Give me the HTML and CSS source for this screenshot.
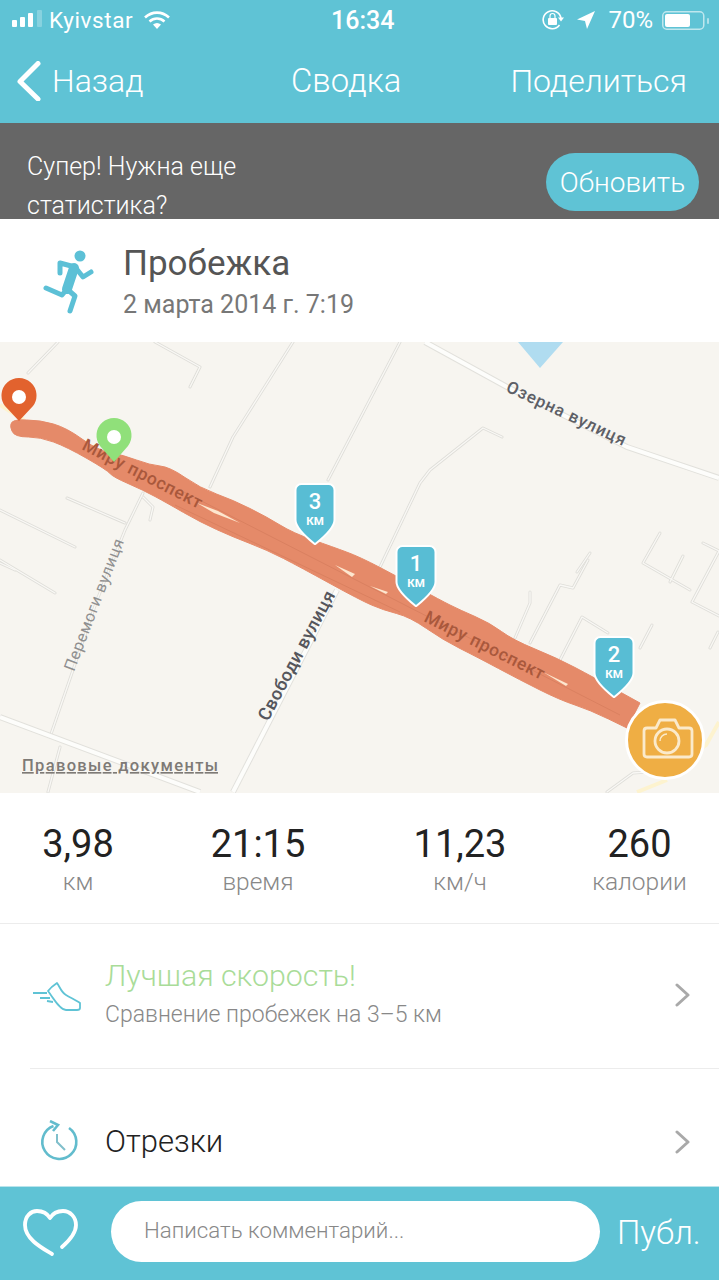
FILE: index.html
```html
<!DOCTYPE html>
<html lang="ru">
<head>
<meta charset="utf-8">
<title>Сводка</title>
<link rel="stylesheet" href="styles.css">
</head>
<body>
<div class="app">
  <header class="top">
    <div class="status">
      <div class="status-side">
        <svg class="signal" width="32" height="20" viewBox="0 0 32 20"><rect class="bar" x="0" y="10" width="5" height="7" rx="1"/><rect class="bar" x="8" y="7" width="5" height="10" rx="1"/><rect class="bar" x="16" y="3" width="5" height="14" rx="1"/><rect class="bar faded" x="25" y="0" width="5" height="17" rx="1"/></svg>
        <span class="carrier">Kyivstar</span>
        <svg class="wifi" width="28" height="20" viewBox="0 0 28 20"><path class="wifi-arc" d="M2 7.500C9 1 19 1 26 7.500"/><path class="wifi-arc" d="M6.500 11.500C11 7.500 17 7.500 21.500 11.500"/><path class="icon-fill" d="M10 14.500C12.500 12.500 15.500 12.500 18 14.500L14 19Z"/></svg>
      </div>
      <span class="clock">16:34</span>
      <div class="status-side">
        <svg class="rot-lock" width="24" height="22" viewBox="0 0 24 22"><path class="lock-arc" d="M18.500 16A9 9 0 1 1 20 9"/><path class="icon-fill" d="M17 8.500h6l-3 4z"/><rect class="icon-fill" x="7" y="9" width="9" height="7" rx="1"/><path class="lock-arc thin" d="M9 9V7a2.500 2.500 0 0 1 5 0v2"/></svg>
        <svg class="loc" width="20" height="20" viewBox="0 0 20 20"><path class="icon-fill" d="M19 1 1 9.500l8 1.500 2 8Z"/></svg>
        <span class="percent">70%</span>
        <svg class="battery" width="49" height="20" viewBox="0 0 49 20"><rect class="batt-case" x="0.750" y="0.750" width="41" height="17.500" rx="4"/><rect class="icon-fill" x="3" y="3" width="25" height="13" rx="2"/><rect class="batt-nub" x="45" y="7" width="2" height="6" rx="1"/></svg>
      </div>
    </div>
    <nav class="nav">
      <div class="nav-back">
        <svg width="24" height="40" viewBox="0 0 24 40"><path class="back-arrow" d="M21 2.500 3 20.500 21 38"/></svg>
        <span>Назад</span>
      </div>
      <span class="nav-title">Сводка</span>
      <span class="nav-action">Поделиться</span>
    </nav>
  </header>

  <section class="banner">
    <p class="banner-text">Супер! Нужна еще<br>статистика?</p>
    <span class="banner-btn">Обновить</span>
  </section>

  <section class="activity">
    <svg class="runner" width="56" height="68" viewBox="40 248 56 68">
      <circle class="icon-fill-b" cx="80" cy="256" r="5.500"/>
      <path class="run-limb" d="M60 273V263L75 267L83 277L91 272"/>
      <path class="run-torso" d="M74 268 67 289"/>
      <path class="run-limb" d="M67 289 62 295 46 288"/>
      <path class="run-limb" d="M67 289 75 296 70 311"/>
    </svg>
    <div class="activity-text">
      <h1 class="activity-title">Пробежка</h1>
      <p class="activity-date">2 марта 2014 г. 7:19</p>
    </div>
  </section>

  <section class="map">
    <svg class="map-svg" width="719" height="451" viewBox="0 342 719 451">
      <defs>
        <g id="thin-roads">
          <path d="M58 342 28 373"/>
          <path d="M155 342 200 367 190 387"/>
          <path d="M293 342 233 437 210 487"/>
          <path d="M400 342 328 480"/>
          <path d="M67 498 125 523"/>
          <path d="M143 493 125 530 97 600 72 673 50 737"/>
          <path d="M60 747 48 792"/>
          <path d="M0 510 75 547"/>
          <path d="M0 560 55 593"/>
          <path d="M143 497 153 507 150 520"/>
          <path d="M502 437 483 428 430 470 420 483 380 567"/>
          <path d="M660 533 643 563 690 590"/>
          <path d="M590 553 577 572"/>
          <path d="M588 560 573 588 560 585 530 643"/>
          <path d="M530 592 530 603 515 638"/>
          <path d="M652 625 640 648"/>
          <path d="M608 633 582 617 560 660"/>
          <path d="M683 556 670 582"/>
          <path d="M703 543 719 551 692 602 719 616"/>
          <path d="M718 632 710 648"/>
          <path d="M607 792 633 773 647 772"/>
          <path d="M0 563 15 570"/>
        </g>
        <g id="wide-roads">
          <path d="M425 342 507 387 627 447 719 478"/>
          <path d="M337 590 233 792"/>
          <path d="M0 717 200 792"/>
        </g>
        <path id="km-pin" d="M-18.500 5a5 5 0 0 1 5-5h27a5 5 0 0 1 5 5v30Q18.500 43 0 58Q-18.500 43-18.500 35Z"/>
      </defs>
      <path class="water" d="M518 342 540 368 563 342Z"/>
      <use class="road-out" href="#thin-roads"/>
      <use class="road-in" href="#thin-roads"/>
      <use class="wide-out" href="#wide-roads"/>
      <use class="wide-in" href="#wide-roads"/>
      <path class="road-yellow" d="M0 405 24 420"/>
      <path class="road-yellow" d="M637 792 667 780"/>
      <path class="road-yellow" d="M719 722 706 745 665 772"/>

      <path class="route" d="M11 424Q12 419 26.500 420Q40 420 53.500 424Q67 428 82 439Q97 450 110 452.500Q123 455 136.500 460Q150 465 160 466Q170 467 185 477.500Q200 488 216.500 494Q233 500 250 508.500Q267 517 280 525Q293 533 313 540Q333 547 346.500 552Q360 557 380 567.500Q400 578 420 589Q440 600 450 605Q460 610 475 616.500Q490 623 501.500 631.500Q513 640 535 649Q557 658 575 667.500Q593 677 616.500 690L640 703 627 728 608.500 719Q590 710 575 705Q560 700 540 690Q520 680 498.500 668.500Q477 657 460 648.500Q443 640 426.500 628.500Q410 617 396.500 613.500Q383 610 371.500 605Q360 600 330 583.500Q300 567 283.500 558.500Q267 550 250 543.500Q233 537 216.500 529.500Q200 522 183.500 512.500Q167 503 155 496.500Q143 490 128 483.500Q113 477 110 473.500Q107 470 87 458.500Q67 447 53.500 442Q40 437 28.500 437Q14 437 12 431Q10 427 11 424Z"/>
      <path class="route-line" d="M180 490 620 715"/>
      <path class="route-line" d="M175 505 400 612"/>
      <path class="route-gap" d="M197 503 218 511 240 523 214 513Z"/>
      <path class="route-gap" d="M335 565 355 574 352 577Z"/>
      <path class="route-gap" d="M370 586 388 592 386 594Z"/>
      <path class="route-gap" d="M543 672 568 684 566 686Z"/>

      <text class="label-route" transform="translate(81 449) rotate(27)" textLength="132">Миру проспект</text>
      <text class="label-route" transform="translate(423 621) rotate(26.500)" textLength="132">Миру проспект</text>
      <text class="label-street" transform="translate(505 391) rotate(25)" textLength="130">Озерна вулиця</text>
      <text class="label-street strong" transform="translate(268 722) rotate(-62)" textLength="144">Свободи вулиця</text>
      <text class="label-street faint" transform="translate(74 672) rotate(-69)" textLength="140">Перемоги вулиця</text>
      <text class="legal" x="22" y="771" textLength="196">Правовые документы</text>

      <g transform="translate(19 397)">
        <path class="pin-red" d="M0 24-14 9A17.500 17.500 0 1 1 14 9Z"/>
        <circle class="pin-dot" r="7"/>
      </g>
      <g transform="translate(114 437)">
        <path class="pin-green" d="M0 25-14 9A17.500 17.500 0 1 1 14 9Z"/>
        <circle class="pin-dot" r="7"/>
      </g>

      <g transform="translate(315 485)">
        <use class="km-shield" href="#km-pin"/>
        <text class="km-num" y="23.500">3</text><text class="km-unit" y="39.500">КМ</text>
      </g>
      <g transform="translate(416 547)">
        <use class="km-shield" href="#km-pin"/>
        <text class="km-num" y="23.500">1</text><text class="km-unit" y="39.500">КМ</text>
      </g>
      <g transform="translate(614 638)">
        <use class="km-shield" href="#km-pin"/>
        <text class="km-num" y="23.500">2</text><text class="km-unit" y="39.500">КМ</text>
      </g>

      <circle class="cam-ring" cx="665" cy="740" r="38.500"/>
      <path class="cam-line" d="M647 728H656L660 720H675L679 728H689Q692 728 692 731V754Q692 757 689 757H647Q644 757 644 754V731Q644 728 647 728Z"/>
      <circle class="cam-line" cx="667" cy="741" r="12"/>
      <path class="cam-line thin" d="M660 741A7 7 0 0 1 667 734"/>
    </svg>
  </section>

  <section class="stats">
    <div class="stat"><span class="stat-value">3,98</span><span class="stat-label">км</span></div>
    <div class="stat"><span class="stat-value">21:15</span><span class="stat-label">время</span></div>
    <div class="stat"><span class="stat-value">11,23</span><span class="stat-label">км/ч</span></div>
    <div class="stat"><span class="stat-value">260</span><span class="stat-label">калории</span></div>
  </section>

  <section class="row row-best">
    <svg class="row-icon" width="75" height="40" viewBox="0 0 75 40">
      <path class="line-icon" d="M18 16C21 12 24 10 27 8C30 12 31 17 36 20C41 23 46 25 50 28V33Q50 35 47 35H36C30 35 24 24 18 16Z"/>
      <path class="line-icon" d="M3 18H17M10 23H20M17 26 23 27"/>
    </svg>
    <div class="row-body">
      <div class="row-title best">Лучшая скорость!</div>
      <div class="row-sub">Сравнение пробежек на 3–5 км</div>
    </div>
    <svg class="chev" width="16" height="24" viewBox="0 0 16 24"><path class="chev-line" d="M2 2 13 12 2 22"/></svg>
  </section>

  <section class="row row-splits">
    <svg class="row-icon" width="75" height="44" viewBox="0 0 75 44">
      <path class="clock-line" d="M23.500 6A17 17 0 1 0 39 8"/>
      <path class="clock-line" d="M20 1 28 5 23 11"/>
      <path class="clock-line thin" d="M27 14V22L35 30"/>
    </svg>
    <div class="row-body"><div class="row-title splits">Отрезки</div></div>
    <svg class="chev" width="16" height="24" viewBox="0 0 16 24"><path class="chev-line" d="M2 2 13 12 2 22"/></svg>
  </section>

  <footer class="composer">
    <svg class="heart" width="56" height="48" viewBox="0 0 56 48"><path class="heart-line" d="M30 45C20 39 3 30 3 16C3 7 9 2 15 2C21 2 25 4 28 9C31 4 35 2 41 2C48 2 54 8 54 16C54 24 48 31 40 38"/></svg>
    <div class="composer-input">Написать комментарий...</div>
    <span class="composer-send">Публ.</span>
  </footer>
</div>
</body>
</html>
```
FILE: styles.css
```css
* { box-sizing: border-box; }
html, body { margin: 0; padding: 0; background: #fff; }
body { font-family: Roboto, "Liberation Sans", sans-serif; font-weight: 300; }
h1, p { margin: 0; font-weight: inherit; }
.app { width: 719px; height: 1280px; overflow: hidden; display: flex; flex-direction: column; }

.top { background: #5fc3d5; color: #fff; height: 123px; flex: none; }
.status { height: 40px; padding: 0 8px 0 12px; display: flex; align-items: center; justify-content: space-between; position: relative; }
.status-side { display: flex; align-items: center; }
.carrier { font-size: 22.500px; margin-left: 5px; letter-spacing: .6px; font-weight: 400; }
.wifi { margin-left: 10px; }
.wifi-arc { fill: none; stroke: #fff; stroke-width: 2.6; }
.icon-fill { fill: #fff; }
.icon-fill-b { fill: #5cc0d6; }
.bar { fill: #fff; }
.bar.faded { opacity: .25; }
.clock { font-size: 25px; font-weight: 500; position: absolute; left: 331px; top: 6px; }
.rot-lock { margin-right: 11px; }
.loc { margin-right: 12px; }
.lock-arc { fill: none; stroke: #fff; stroke-width: 1.6; }
.lock-arc.thin { stroke-width: 1.2; }
.percent { font-size: 24px; margin-right: 9px; font-weight: 400; }
.battery { margin-top: 1px; }
.batt-case { fill: none; stroke: rgba(255,255,255,.6); stroke-width: 1.5; }
.batt-nub { fill: rgba(255,255,255,.5); }

.nav { height: 83px; padding: 0 32px 2px 17px; display: flex; align-items: center; justify-content: space-between; font-size: 32px; position: relative; }
.nav-back { display: flex; align-items: center; gap: 11px; }
.back-arrow { fill: none; stroke: #fff; stroke-width: 5; stroke-linecap: round; stroke-linejoin: round; }
.nav-title { position: absolute; left: 291px; top: 0; height: 100%; display: flex; align-items: center; padding-bottom: 2px; font-size: 32.800px; }

.banner { background: #666; color: #fff; height: 96px; flex: none; padding: 24px 20px 0 27px; display: flex; justify-content: space-between; overflow: hidden; }
.banner-text { font-size: 25px; line-height: 39px; }
.banner-btn { width: 153px; height: 58px; border-radius: 29px; margin-top: 6px; background: #5fc3d5; font-size: 28px; display: flex; align-items: center; justify-content: center; }

.activity { height: 123px; flex: none; display: flex; align-items: center; padding: 0 0 0 40px; gap: 27px; }
.runner { margin-top: 3px; }
.activity-text { margin-top: 5px; }
.activity-title { font-size: 35px; color: #555; line-height: 42px; font-weight: 400; }
.activity-date { font-size: 25px; color: #777; line-height: 36px; margin-top: 2px; font-weight: 400; }
.run-limb { fill: none; stroke: #5cc0d6; stroke-width: 5; stroke-linecap: round; stroke-linejoin: round; }
.run-torso { fill: none; stroke: #5cc0d6; stroke-width: 10; stroke-linecap: round; }

.map { height: 451px; flex: none; background: #f7f5f0; overflow: hidden; }
.map-svg { display: block; }
.water { fill: #b0dcf0; }
.road-out { fill: none; stroke: #dfded9; stroke-width: 3; stroke-linecap: round; stroke-linejoin: round; }
.road-in { fill: none; stroke: #f9f8f5; stroke-width: 1.300; stroke-linecap: round; stroke-linejoin: round; }
.wide-out { fill: none; stroke: #e2e1dc; stroke-width: 6; }
.wide-in { fill: none; stroke: #fdfdfb; stroke-width: 4; }
.road-yellow { fill: none; stroke: #fdf3cf; stroke-width: 4; }
.route { fill: #e58a69; stroke: #e58a69; stroke-width: 1; stroke-linejoin: round; }
.route-line { stroke: #da8060; stroke-width: 1; fill: none; }
.route-gap { fill: #fde7cf; }
.label-route { font-family: Roboto, sans-serif; font-size: 17.500px; font-weight: 500; fill: #a9583c; }
.label-street { font-family: Roboto, sans-serif; font-size: 17px; font-weight: 500; fill: #5d5f66; }
.label-street.strong { font-size: 18px; fill: #55565c; }
.label-street.faint { font-weight: 400; font-size: 16px; fill: #8f8f8f; }
.legal { font-family: Roboto, sans-serif; font-size: 16.500px; font-weight: 500; fill: #7e7a76; text-decoration: underline; }
.pin-red { fill: #e2622e; }
.pin-green { fill: #90e07a; }
.pin-dot { fill: #fff; }
.km-shield { fill: #58bdd4; stroke: #fff; stroke-width: 4; stroke-linejoin: round; paint-order: stroke; }
.km-num { font-family: Roboto, sans-serif; font-size: 22px; font-weight: 500; fill: #fff; text-anchor: middle; }
.km-unit { font-family: Roboto, sans-serif; font-size: 11.500px; font-weight: 700; fill: #fff; text-anchor: middle; }
.cam-ring { fill: #efae44; stroke: #fff; stroke-width: 3; }
.cam-line { fill: none; stroke: #fbeacb; stroke-width: 2.800; stroke-linejoin: round; }
.cam-line.thin { stroke-width: 1.500; }

.stats { height: 131px; flex: none; display: grid; grid-template-columns: 156px 204px 200px 159px; border-bottom: 1px solid #ececec; padding-top: 29px; }
.stat { display: flex; flex-direction: column; align-items: center; }
.stat-value { font-size: 38px; line-height: 44px; color: #222; font-weight: 400; }
.stat-label { font-size: 24.500px; line-height: 32px; color: #888; }

.row { display: flex; align-items: center; flex: none; padding-right: 28px; }
.row-icon { flex: none; margin-left: 30px; }
.row-body { flex: 1; }
.row-best { height: 145px; position: relative; padding-bottom: 4px; }
.row-best::after { content: ""; position: absolute; left: 30px; right: 0; bottom: 0; height: 1px; background: #ececec; }
.row-splits { flex: 1; padding-top: 28px; }
.row-title { font-size: 30.300px; line-height: 38px; color: #222; }
.row-title.best { color: #a9dc98; }
.row-title.splits { font-size: 31px; }
.row-sub { font-size: 23px; line-height: 34px; color: #888; margin-top: 3px; }
.line-icon { fill: none; stroke: #5fc3d5; stroke-width: 1.800; stroke-linejoin: round; }
.clock-line { fill: none; stroke: #62bccd; stroke-width: 2.600; }
.clock-line.thin { stroke-width: 2; stroke: #80bfcb; }
.chev-line { fill: none; stroke: #a9a9a9; stroke-width: 3; stroke-linecap: round; stroke-linejoin: round; }

.composer { height: 94px; flex: none; background: #5fc3d5; display: flex; align-items: center; padding: 0 19px 5px 22px; border-top: 1px solid #b9e4ec; }
.heart { flex: none; margin-right: 33px; margin-top: 3px; }
.heart-line { fill: none; stroke: #fff; stroke-width: 3.800; stroke-linecap: round; stroke-linejoin: round; }
.composer-input { width: 489px; height: 61px; border-radius: 31px; background: #fff; color: #888; font-size: 22.300px; display: flex; align-items: center; padding: 0 0 3px 33px; flex: none; }
.composer-send { color: #fff; font-size: 33px; margin-left: 17px; margin-top: 3px; }
```
